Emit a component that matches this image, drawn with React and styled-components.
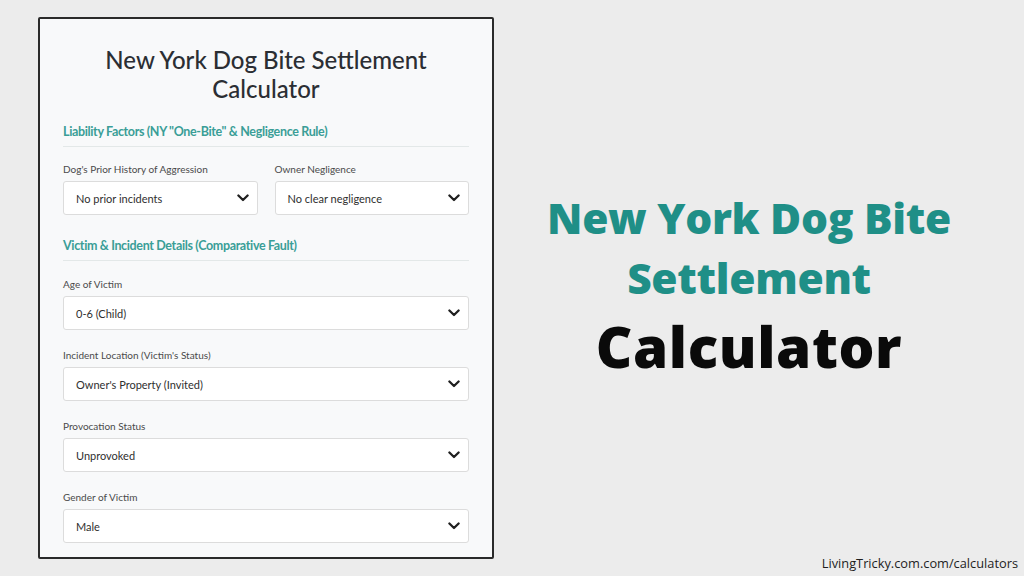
import React from 'react';
import styled, { createGlobalStyle } from 'styled-components';

const GlobalStyle = createGlobalStyle`
  html, body {
    margin: 0;
    padding: 0;
    background: #ececec;
  }
  body {
    font-family: Lato, "Open Sans", sans-serif;
  }
`;

const Page = styled.div`
  width: 1024px;
  height: 576px;
  display: flex;
  overflow: hidden;
`;

const Card = styled.section`
  box-sizing: border-box;
  width: 456px;
  height: 542px;
  margin: 17px 0 0 38px;
  padding: 26px 23px 0 23px;
  background: #f8f9fa;
  border: 2px solid #2a2a2a;
  border-radius: 2px;
  display: flex;
  flex-direction: column;
`;

const Title = styled.h1`
  margin: 0 0 20px;
  font-family: Lato, sans-serif;
  font-weight: 500;
  font-size: 24px;
  line-height: 29px;
  color: #2b2e33;
  text-align: center;
`;

const SectionHead = styled.h2`
  margin: 0 0 ${(p) => p.$mb ?? 16}px;
  padding-bottom: 5px;
  border-bottom: 1px solid #e3e8e8;
  font-family: Lato, sans-serif;
  font-weight: 700;
  font-size: 12.5px;
  line-height: 18px;
  letter-spacing: -0.35px;
  color: #3a9e97;
`;

const Row = styled.div`
  display: grid;
  grid-template-columns: 1fr 1fr;
  column-gap: 17px;
  margin-bottom: ${(p) => p.$gap || 20}px;
`;

const Field = styled.div`
  display: flex;
  flex-direction: column;
  gap: 5px;
  margin-bottom: ${(p) => p.$gap ?? 18}px;
`;

const Label = styled.label`
  font-family: Lato, sans-serif;
  font-size: 10px;
  line-height: 14px;
  color: #4a4a4a;
`;

const SelectBox = styled.div`
  box-sizing: border-box;
  height: 34px;
  display: flex;
  align-items: center;
  justify-content: space-between;
  padding: 0 8px 0 12px;
  background: #ffffff;
  border: 1px solid #dcdcdc;
  border-radius: 3px;
  font-family: Lato, sans-serif;
  font-size: 11px;
  color: #2f2f2f;
`;

const Chevron = () => (
  <svg width="12" height="8" viewBox="0 0 12 8">
    <path d="M1.4 1.5 L6 6 L10.6 1.5" fill="none" stroke="#1f1f1f" strokeWidth="2.3" strokeLinecap="round" strokeLinejoin="round" />
  </svg>
);

const Side = styled.div`
  flex: 1;
  display: flex;
  flex-direction: column;
`;

const Hero = styled.div`
  flex: 1;
  display: flex;
  flex-direction: column;
  align-items: center;
  justify-content: center;
  padding: 18px 20px 0 0;
  font-family: "Open Sans", sans-serif;
  font-weight: 800;
  text-align: center;
`;

const HeroLine = styled.div`
  font-size: ${(p) => p.$size}px;
  line-height: ${(p) => p.$lh}px;
  color: ${(p) => p.$color};
  letter-spacing: ${(p) => p.$ls}px;
`;

const Footer = styled.div`
  align-self: flex-end;
  padding: 0 6px 4px 0;
  font-family: "Open Sans", sans-serif;
  font-size: 12.8px;
  line-height: 17px;
  color: #1e1e1e;
`;

function Select({ value }) {
  return (
    <SelectBox>
      <span>{value}</span>
      <Chevron />
    </SelectBox>
  );
}

const victimFields = [
  ['Age of Victim', '0-6 (Child)'],
  ["Incident Location (Victim's Status)", "Owner's Property (Invited)"],
  ['Provocation Status', 'Unprovoked'],
  ['Gender of Victim', 'Male'],
];

export default function App() {
  return (
    <Page>
      <GlobalStyle />
      <Card>
        <Title>
          New York Dog Bite Settlement
          <br />
          Calculator
        </Title>
        <SectionHead $mb={15}>Liability Factors (NY "One-Bite" &amp; Negligence Rule)</SectionHead>
        <Row $gap={22}>
          <Field $gap={0}>
            <Label>Dog's Prior History of Aggression</Label>
            <Select value="No prior incidents" />
          </Field>
          <Field $gap={0}>
            <Label>Owner Negligence</Label>
            <Select value="No clear negligence" />
          </Field>
        </Row>
        <SectionHead $mb={16}>Victim &amp; Incident Details (Comparative Fault)</SectionHead>
        {victimFields.map(([label, value]) => (
          <Field key={label}>
            <Label>{label}</Label>
            <Select value={value} />
          </Field>
        ))}
      </Card>
      <Side>
        <Hero>
          <HeroLine $size={42.5} $lh={60} $ls={-0.3} $color="#1f8f87">New York Dog Bite</HeroLine>
          <HeroLine $size={42.5} $lh={60} $ls={-0.3} $color="#1f8f87">Settlement</HeroLine>
          <HeroLine $size={56.5} $lh={78} $ls={0.6} $color="#0a0a0a">Calculator</HeroLine>
        </Hero>
        <Footer>LivingTricky.com.com/calculators</Footer>
      </Side>
    </Page>
  );
}
